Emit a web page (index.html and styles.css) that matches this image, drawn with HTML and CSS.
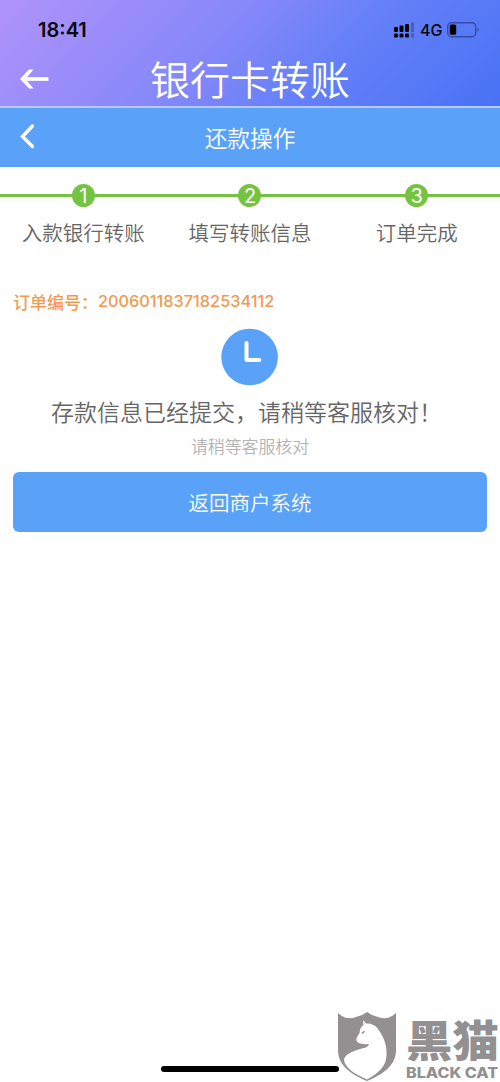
FILE: index.html
```html
<!DOCTYPE html>
<html lang="zh-CN">
<head>
<meta charset="utf-8">
<title>银行卡转账</title>
<link rel="stylesheet" href="styles.css">
</head>
<body>
<header class="top">
  <div class="status">
    <span class="time">18:41</span>
    <svg class="signal" width="21" height="16" viewBox="0 0 21 16">
      <rect x="0" y="5" width="4" height="5" rx="1.300"/><rect x="5.500" y="3.500" width="4" height="6.500" rx="1.300"/><rect x="11" y="2" width="4" height="8" rx="1.300"/>
      <rect x="0" y="11.500" width="4" height="4" rx="1.300"/><rect x="5.500" y="11.500" width="4" height="4" rx="1.300"/><rect x="11" y="11.500" width="4" height="4" rx="1.300"/>
      <path class="faint" d="M17 .5h3v9.500h-3zM17 11.500h3v4h-3z"/>
    </svg>
    <span class="network">4G</span>
    <svg class="battery" width="33" height="16" viewBox="0 0 33 16">
      <rect class="shell" x=".7" y=".7" width="28" height="14" rx="3.800"/><rect x="2.800" y="2.600" width="6.400" height="10.200" rx="1.500"/><path class="cap" d="M30.500 5.500q3 2.200 0 4.400z"/>
    </svg>
  </div>
  <div class="titlebar">
    <svg class="back" width="30" height="22" viewBox="0 0 30 22"><path class="shaft" d="M29.500 11H5"/><path class="head" d="M10 1.500H14.500L6.500 11L14.500 20.500H10L1 11Z"/></svg>
    <h1 class="title">银行卡转账</h1>
  </div>
</header>
<nav class="nav">
  <svg class="chevron" width="16" height="26" viewBox="0 0 16 26"><path d="M13.500 3L3.500 13.500L13.500 23.500"/></svg>
  <h2 class="nav-title">还款操作</h2>
</nav>
<main>
  <ol class="steps">
    <li class="step"><span class="num">1</span><span>入款银行转账</span></li>
    <li class="step"><span class="num">2</span><span>填写转账信息</span></li>
    <li class="step"><span class="num">3</span><span>订单完成</span></li>
  </ol>
  <p class="order"><span class="order-label">订单编号：</span><span class="order-id">2006011837182534112</span></p>
  <svg class="clock" width="58" height="58" viewBox="0 0 58 58"><circle cx="28.600" cy="29" r="28.300"/><path d="M25.500 15v17h12.800"/></svg>
  <p class="message">存款信息已经提交，请稍等客服核对！</p>
  <p class="hint">请稍等客服核对</p>
  <button class="action" type="button">返回商户系统</button>
</main>
<div class="home"></div>
<div class="watermark">
  <svg class="shield" width="60" height="70" viewBox="0 0 60 70">
    <path class="gray" d="M1 1Q9 9 19 5Q25 4 30 0Q35 4 41 5Q51 9 59 1V38C59 53 47 62 30 69C13 62 1 53 1 38Z"/>
    <path class="cat" d="M26 8L29 11.500Q37 11 41 17C48 27 50 34 49.500 44C49 54 42 61 30 67.500C17 62 7 55 7 47C9 41 19 38 27 36Q31 35 32 32Q28 32.500 23 31.500Q18.500 30 19.500 26L22.500 21Q23 15 26.500 13Z"/>
    <path class="gray" d="M24.500 21.500Q25 18.500 28 19Q27 22.500 24.500 21.500Z"/>
  </svg>
  <div class="brand">
    <span class="brand-cn">黑猫</span>
    <span class="brand-en">BLACK CAT</span>
  </div>
</div>
</body>
</html>
```
FILE: styles.css
```css
* { box-sizing: border-box; }
body {
  margin: 0;
  height: 1082px;
  position: relative;
  overflow: hidden;
  background: #fff;
  color: #666;
  font-family: "Noto Sans CJK SC", sans-serif;
  font-weight: 350;
}
h1, h2, p, ol { margin: 0; padding: 0; font-weight: inherit; }
svg { display: block; flex: none; }
.top {
  height: 108px;
  padding-top: 18px;
  border-bottom: 2px solid #b9c8f5;
  background: linear-gradient(135deg, #b093fa 0%, #8788f9 42%, #6580f8 65%, #4872f5 100%);
  background-clip: padding-box;
}
.status {
  display: flex;
  align-items: center;
  height: 24px;
  padding: 0 20px 0 38px;
  color: #08080c;
  font-family: Inter, sans-serif;
}
.time { flex: 1; font-size: 20px; font-weight: 600; }
.signal { margin-right: 5px; }
.faint { opacity: .25; }
.network { width: 27px; font-size: 16px; font-weight: 500; }
.shell { fill: none; stroke: #344ca8; stroke-width: 1.400; }
.cap { fill: #344ca8; }
.titlebar {
  display: grid;
  grid-template-columns: 50px 1fr 50px;
  align-items: center;
  height: 74px;
  color: #fff;
}
.back { margin-left: 19px; }
.shaft { fill: none; stroke: #fff; stroke-width: 3.700; }
.head { fill: #fff; }
.title { margin-top: -2px; text-align: center; font-size: 40px; line-height: 60px; }
.nav {
  display: grid;
  grid-template-columns: 50px 1fr 50px;
  align-items: center;
  height: 59px;
  background: #5aa1f8;
  color: #fff;
}
.chevron { margin: -3px 0 0 19px; }
.chevron path { fill: none; stroke: #fff; stroke-width: 3.400; stroke-linecap: round; }
.nav-title { text-align: center; font-size: 22.700px; line-height: 34px; }
main { display: flex; flex-direction: column; padding: 0 13px; }
.steps {
  display: grid;
  grid-template-columns: repeat(3, 1fr);
  margin: 0 -13px;
  padding-top: 17px;
  list-style: none;
  background: linear-gradient(#74c442, #74c442) 0 27px / 100% 3px no-repeat;
}
.step { display: flex; flex-direction: column; align-items: center; gap: 9px; font-size: 20.500px; line-height: 32px; }
.num {
  width: 23px;
  height: 23px;
  border-radius: 50%;
  background: #74c442;
  color: #fff;
  text-align: center;
  font: 400 20px/24px Inter, sans-serif;
}
.order { display: flex; align-items: center; height: 26px; margin-top: 40px; color: #f19a50; }
.order-label { width: 85px; font-size: 17px; font-weight: 500; white-space: nowrap; }
.order-id { font: 500 16.300px Inter, sans-serif; }
.clock { align-self: center; margin-top: 14px; }
.clock circle { fill: #5aa1f8; }
.clock path { fill: none; stroke: #fff; stroke-width: 4; stroke-linecap: round; stroke-linejoin: round; }
.message { margin-top: 8px; padding-left: 38px; font-size: 23px; line-height: 34px; white-space: nowrap; }
.hint { margin-top: 6px; text-align: center; color: #b3b3b3; font-size: 16.900px; line-height: 24px; }
.action {
  height: 60px;
  margin-top: 14px;
  padding: 0;
  border: 0;
  border-radius: 6px;
  background: #5aa1f8;
  color: #fff;
  font: inherit;
  font-size: 20.500px;
}
.home { position: absolute; left: 161px; top: 1066px; width: 178px; height: 6px; border-radius: 3px; background: #000; }
.watermark { position: absolute; left: 337px; top: 1012px; display: flex; gap: 9px; }
.gray { fill: #929090; }
.cat { fill: #fff; }
.brand { display: flex; flex-direction: column; color: #929090; }
.brand-cn { height: 51px; font-size: 43px; font-weight: 900; line-height: 53px; white-space: nowrap; transform: scaleX(1.080); transform-origin: left; }
.brand-en { font: 800 14px/20px Inter, sans-serif; transform: scaleX(1.150); transform-origin: left; white-space: nowrap; }
```
